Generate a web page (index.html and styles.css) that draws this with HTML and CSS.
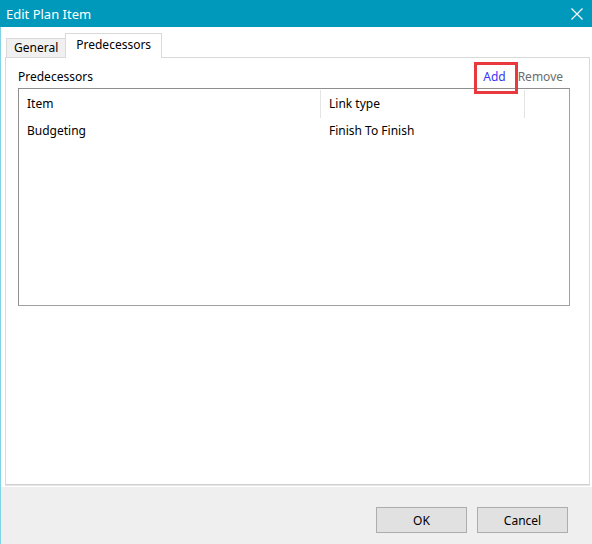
FILE: index.html
```html
<!DOCTYPE html>
<html lang="en">
<head>
    <meta charset="UTF-8">
    <meta name="viewport" content="width=device-width, initial-scale=1.0">
    <title>Edit Plan Item</title>
    <link rel="stylesheet" href="styles.css">
</head>
<body>
    <div class="dialog">
        <div class="titlebar">
            <span class="title">Edit Plan Item</span>
            <button class="close" title="Close">
                <svg width="12" height="12" viewBox="0 0 12 12">
                    <path d="M0.5 0.5 L11.5 11.5 M11.5 0.5 L0.5 11.5" stroke="#fff" stroke-width="1.2" fill="none"/>
                </svg>
            </button>
        </div>

        <div class="content">
            <div class="tabs">
                <div class="tab">General</div>
                <div class="tab active">Predecessors</div>
            </div>
            <div class="tab-page">
                <div class="section-head">
                    <span class="section-title">Predecessors</span>
                    <div class="links">
                        <a href="#" class="link add">Add</a>
                        <a href="#" class="link remove">Remove</a>
                    </div>
                </div>
                <div class="listview">
                    <div class="lv-header">
                        <div class="col col-item">Item</div>
                        <div class="col col-type">Link type</div>
                        <div class="col col-rest"></div>
                    </div>
                    <div class="lv-row">
                        <div class="col col-item">Budgeting</div>
                        <div class="col col-type">Finish To Finish</div>
                    </div>
                </div>
            </div>
        </div>

        <div class="footer">
            <button class="btn">OK</button>
            <button class="btn">Cancel</button>
        </div>
    </div>
</body>
</html>
```

FILE: styles.css
```css
body {
    margin: 0;
    font-family: "Segoe UI", "Noto Sans", sans-serif;
    font-size: 12px;
    color: #000;
}
.dialog {
    width: 592px;
    height: 544px;
    display: flex;
    flex-direction: column;
    overflow: hidden;
}
.titlebar {
    height: 27px;
    background: #0099bc;
    color: #fff;
    display: flex;
    align-items: center;
    justify-content: space-between;
    padding: 0 9px 0 6px;
    flex-shrink: 0;
}
.title {
    font-size: 13px;
}
.close {
    background: none;
    border: none;
    padding: 0;
    width: 12px;
    height: 12px;
    display: flex;
}
.content {
    background: #fff;
    border-left: 1px solid #80d2e4;
    padding: 6px 2px 2px 4px;
    height: 452px;
}
.tabs {
    display: flex;
    align-items: flex-end;
    height: 24px;
    padding-left: 1px;
}
.tab {
    height: 19px;
    line-height: 18px;
    padding: 0 7px;
    background: #f0f0f0;
    border: 1px solid #d9d9d9;
    border-bottom: none;
    box-sizing: border-box;
}
.tab.active {
    height: 25px;
    line-height: 22px;
    margin-bottom: -1px;
    margin-left: -1px;
    background: #fff;
    padding: 0 10px;
    position: relative;
    z-index: 1;
}
.tab-page {
    height: 428px;
    box-sizing: border-box;
    border: 1px solid #d9d9d9;
    border-bottom-color: #d0d0d0;
    box-shadow: 0 1px 0 #e6e6e6;
    padding: 6px 19px 0 12px;
}
.section-head {
    display: flex;
    justify-content: space-between;
    align-items: center;
    height: 24px;
}
.links {
    display: flex;
    margin-right: 7px;
}
.link {
    text-decoration: none;
}
.add {
    color: #3636f5;
    position: relative;
    margin-right: 12px;
}
/* highlight frame around the Add command */
.add::after {
    content: "";
    position: absolute;
    left: -9px;
    right: -12px;
    top: -6px;
    bottom: -9px;
    border: 3px solid #e8393e;
}
.remove {
    color: #6d6d6d;
}
.listview {
    height: 218px;
    box-sizing: border-box;
    border: 1px solid #a0a0a0;
    border-top-color: #8e8e8e;
    border-left-color: #8e8e8e;
}
.lv-header, .lv-row {
    display: flex;
}
.lv-header {
    height: 29px;
    align-items: center;
}
.lv-row {
    height: 24px;
    align-items: center;
}
.col {
    padding-left: 8px;
    box-sizing: border-box;
}
.col-item {
    width: 302px;
}
.col-type {
    width: 204px;
}
.lv-header .col {
    height: 28px;
    line-height: 28px;
    border-right: 1px solid #e5e5e5;
}
.lv-header .col-rest {
    width: 1px;
    padding: 0;
    border-right: none;
}
.footer {
    flex: 1;
    background: #efefef;
    border-left: 1px solid #80d2e4;
    display: flex;
    justify-content: flex-end;
    gap: 10px;
    padding: 20px 24px 0 0;
}
.btn {
    width: 91px;
    height: 26px;
    background: #e1e1e1;
    border: 1px solid #adadad;
    font-family: "Segoe UI", "Noto Sans", sans-serif;
    font-size: 12px;
    color: #000;
    padding: 0;
}
```
